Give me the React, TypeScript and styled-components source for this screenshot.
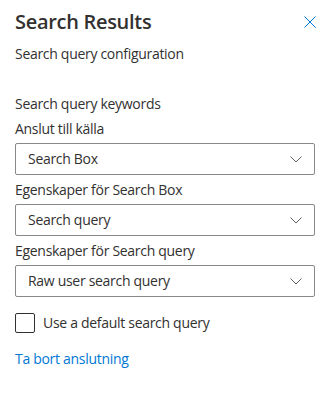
import React from 'react';
import styled, { createGlobalStyle } from 'styled-components';

const GlobalStyle = createGlobalStyle`
  body {
    margin: 0;
    background: #ffffff;
    font-family: "Open Sans", "Noto Sans", sans-serif;
    color: #323130;
    letter-spacing: -0.3px;
  }
`;

type DropdownProps = { value: string };
const Dropdown = ({ value }: DropdownProps) => (
  <DropdownBox>
    <DropdownText>{value}</DropdownText>
    <Chevron width="12" height="7" viewBox="0 0 12 7">
      <path d="M0.5 0.5 L6 6 L11.5 0.5" fill="none" stroke="#605e5c" strokeWidth="1" />
    </Chevron>
  </DropdownBox>
);

export default function App() {
  return (
    <>
      <GlobalStyle />
      <Panel>
        <Header>
          <Title>Search Results</Title>
          <CloseButton aria-label="Stäng">
            <svg width="12" height="12" viewBox="0 0 12 12">
              <path d="M0.5 0.5 L11.5 11.5 M11.5 0.5 L0.5 11.5" stroke="#0078d4" strokeWidth="1" />
            </svg>
          </CloseButton>
        </Header>
        <Subtitle>Search query configuration</Subtitle>
        <SectionHeading>Search query keywords</SectionHeading>
        <Label>Anslut till källa</Label>
        <Dropdown value="Search Box" />
        <Label>Egenskaper för Search Box</Label>
        <Dropdown value="Search query" />
        <Label>Egenskaper för Search query</Label>
        <Dropdown value="Raw user search query" />
        <CheckRow>
          <CheckBox />
          <CheckLabel>Use a default search query</CheckLabel>
        </CheckRow>
        <ActionLink href="#">Ta bort anslutning</ActionLink>
      </Panel>
    </>
  );
}

const Panel = styled.div`
  display: flex;
  flex-direction: column;
  align-items: flex-start;
  padding: 8px 13px 0 15px;
  width: 300px;
`;

const Header = styled.div`
  display: flex;
  justify-content: space-between;
  align-items: flex-start;
  width: 100%;
`;

const Title = styled.h1`
  margin: 0;
  font-size: 20px;
  font-weight: 600;
  line-height: 28px;
  color: #323130;
`;

const CloseButton = styled.button`
  display: flex;
  align-items: center;
  justify-content: center;
  width: 24px;
  height: 24px;
  margin: 2px -7px 0 0;
  padding: 0;
  border: none;
  background: transparent;
`;

const Subtitle = styled.div`
  margin-top: 8px;
  font-size: 14px;
  line-height: 20px;
`;

const SectionHeading = styled.div`
  margin-top: 30px;
  font-size: 14px;
  line-height: 20px;
`;

const Label = styled.label`
  display: block;
  padding: 5px 0 4px;
  font-size: 14px;
  line-height: 20px;
  font-weight: 400;
`;

const DropdownBox = styled.div`
  box-sizing: border-box;
  display: flex;
  align-items: center;
  justify-content: space-between;
  width: 300px;
  height: 32px;
  padding: 0 12px 0 12px;
  border: 1px solid #8a8886;
  border-radius: 2px;
`;

const DropdownText = styled.span`
  font-size: 14px;
  line-height: 30px;
`;

const Chevron = styled.svg`
  display: block;
`;

const CheckRow = styled.div`
  display: flex;
  align-items: center;
  gap: 8px;
  margin-top: 16px;
`;

const CheckBox = styled.div`
  box-sizing: border-box;
  width: 20px;
  height: 20px;
  border: 1px solid #323130;
  border-radius: 2px;
`;

const CheckLabel = styled.span`
  font-size: 14px;
  line-height: 20px;
`;

const ActionLink = styled.a`
  margin-top: 16px;
  font-size: 14px;
  line-height: 20px;
  color: #0078d4;
  text-decoration: none;
`;
